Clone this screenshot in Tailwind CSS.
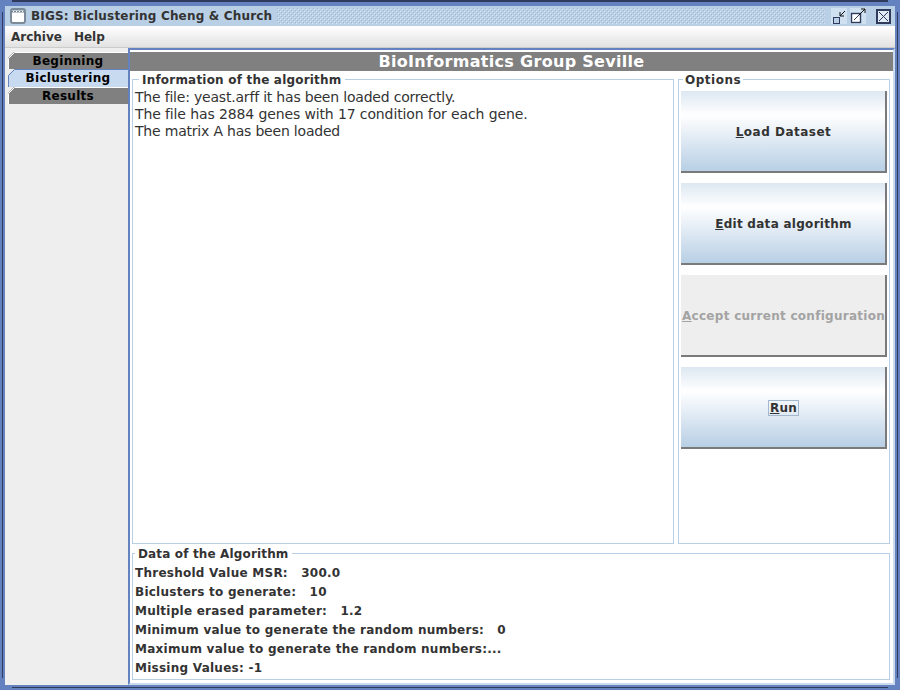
<!DOCTYPE html>
<html lang="en">
<head>
  <meta charset="UTF-8" />
  <title>BIGS: Biclustering Cheng &amp; Church</title>
  <script src="https://cdn.jsdelivr.net/npm/@tailwindcss/browser@4"></script>
</head>
<body class="w-[900px] h-[690px] overflow-hidden bg-[#6382bf] font-['DejaVu_Sans',sans-serif] text-[#333333] text-[12px]">
  <div class="relative w-[900px] h-[690px] pl-[5px] pr-[5px] pt-[6px] pb-[5px] flex flex-col">
    <!-- Frame lines, they stop before the corners -->
    <div class="absolute top-0 left-[12px] right-[12px] h-[2px] bg-[#2f3a5c]"></div>
    <div class="absolute bottom-[2px] left-[12px] right-[12px] h-px bg-[#2f3a5c]"></div>
    <div class="absolute left-[2px] top-[12px] bottom-[12px] w-px bg-[#2f3a5c]"></div>
    <div class="absolute right-[2px] top-[12px] bottom-[12px] w-px bg-[#2f3a5c]"></div>
    <!-- Title bar -->
    <header class="h-[20px] shrink-0 flex items-center bg-[#b8cfe5] pl-[5px]">
      <svg class="w-[16px] h-[16px] shrink-0" viewBox="0 0 16 16"><rect x="1" y="1" width="14" height="14" rx="2" fill="#fff" stroke="#7a8a99" stroke-width="2"/><path d="M2 3.5h12" stroke="#7a8a99" stroke-width="2"/><path d="M3 3.5h10" stroke="#fff" stroke-width="1" stroke-dasharray="1 2"/></svg>
      <span class="ml-[5px] font-bold whitespace-nowrap tracking-[0.18px]">BIGS: Biclustering Cheng &amp; Church</span>
      <svg class="flex-1 h-[16px] mx-[5px] min-w-0" aria-hidden="true"><defs><pattern id="bumps" width="4" height="4" patternUnits="userSpaceOnUse"><rect x="0" y="0" width="1" height="1" fill="#a3b8cc"/><rect x="2" y="2" width="1" height="1" fill="#a3b8cc"/><rect x="1" y="1" width="1" height="1" fill="#dfeaf4"/><rect x="3" y="3" width="1" height="1" fill="#dfeaf4"/></pattern></defs><rect width="100%" height="100%" fill="url(#bumps)"/></svg>
      <svg class="w-[16px] h-[16px] shrink-0 ml-[1px]" viewBox="0 0 16 16"><rect width="16" height="16" fill="#cfe0f0"/><rect x="2.5" y="9.5" width="6" height="6" fill="#b8cfe5" stroke="#2f3a5c"/><path d="M9 8l5-5M9 8h4M9 8V4" stroke="#111" fill="none"/></svg>
      <svg class="w-[16px] h-[16px] shrink-0 ml-[3px]" viewBox="0 0 16 16"><rect width="16" height="16" fill="#cfe0f0"/><rect x="1.5" y="5.5" width="9" height="9" fill="#fff" stroke="#2f3a5c" stroke-width="1.4"/><path d="M4 12l6-6" stroke="#2f3a5c"/><path d="M9 7l6-6M15 1h-4M15 1v4" stroke="#111" fill="none"/></svg>
      <svg class="w-[15px] h-[15px] shrink-0 ml-[10px] mr-[4px]" viewBox="0 0 15 15"><rect x="1" y="1" width="13" height="13" fill="#dfeaf4" stroke="#2f3a5c" stroke-width="2"/><path d="M3 3l9 9M12 3l-9 9" stroke="#2f3a5c"/></svg>
    </header>
    <!-- Menu bar -->
    <nav class="h-[21px] shrink-0 flex items-center gap-[12px] pl-[6px] bg-gradient-to-b from-white to-[#e2e2e2] font-bold">
      <span>Archive</span><span>Help</span>
    </nav>
    <div class="flex-1 flex bg-[#eeeeee] border-t border-[#cccccc] min-h-0">
      <!-- Tabs -->
      <aside class="w-[123px] shrink-0 pt-[4px] pl-[3px] font-bold text-black tracking-[0.3px]">
        <div class="relative h-[17px] flex items-center justify-center">
          <svg class="absolute inset-0 w-full h-full" viewBox="0 0 120 17" preserveAspectRatio="none"><path d="M0 17V6L6 0H120V17Z" fill="#808080"/><path d="M0.5 17V6.5L6.5 0.5H120" fill="none" stroke="#fff"/></svg>
          <span class="relative">Beginning</span>
        </div>
        <div class="relative h-[18px] flex items-center justify-center">
          <svg class="absolute inset-0 w-full h-full" viewBox="0 0 120 18" preserveAspectRatio="none"><path d="M0 18V6L6 0H120V18Z" fill="#c8daef"/><path d="M0.5 18V6.5L6.5 0.5H120" fill="none" stroke="#6382bf"/></svg>
          <span class="relative">Biclustering</span>
        </div>
        <div class="relative h-[17px] flex items-center justify-center">
          <svg class="absolute inset-0 w-full h-full" viewBox="0 0 120 17" preserveAspectRatio="none"><path d="M0 17V6L6 0H120V17Z" fill="#808080"/><path d="M0.5 17V6.5L6.5 0.5H120" fill="none" stroke="#fff"/></svg>
          <span class="relative">Results</span>
        </div>
      </aside>
      <!-- Main panel -->
      <main class="flex-1 min-w-0 flex flex-col bg-white border-l-2 border-t-2 border-r-2 border-b-2 border-l-[#6382bf] border-t-[#6382bf] border-r-[#cbdaec] border-b-[#cbdaec] pt-[2px] pl-[2px] pr-[3px] pb-[3px]">
        <div class="h-[19px] shrink-0 -ml-[2px] -mr-[3px] bg-[#808080] text-white font-bold text-[16px] tracking-[0.3px] flex items-center justify-center">BioInformatics Group Seville</div>
        <div class="flex-1 flex gap-[4px] mt-[8px] min-h-0">
          <section class="relative w-[542px] border border-[#b8cfe5] pt-[9px] pl-[2px] text-[14px] leading-[17px]">
            <span class="absolute -top-[7px] left-[6px] bg-white px-[3px] font-bold text-[12px] tracking-[0.2px] leading-[15px]">Information of the algorithm</span>
            <p class="tracking-[-0.2px]">The file: yeast.arff it has been loaded correctly.</p>
            <p class="tracking-[-0.12px]">The file has 2884 genes with 17 condition for each gene.</p>
            <p class="tracking-[-0.2px]">The matrix A has been loaded</p>
          </section>
          <section class="relative flex-1 border border-[#b8cfe5] pt-[11px] pl-[2px] flex flex-col gap-[10px]">
            <span class="absolute -top-[7px] left-[4px] bg-white px-[2px] font-bold tracking-[0.5px] leading-[15px]">Options</span>
            <button class="w-[206px] h-[82px] shrink-0 pt-px pl-px border-r-2 border-b-2 border-[#7a7a7a] bg-gradient-to-b from-[#dde8f2] via-white via-30% to-[#b8cfe5] font-bold tracking-[0.5px]"><u>L</u>oad Dataset</button>
            <button class="w-[206px] h-[82px] shrink-0 pt-px pl-px border-r-2 border-b-2 border-[#7a7a7a] bg-gradient-to-b from-[#dde8f2] via-white via-30% to-[#b8cfe5] font-bold tracking-[0.28px]"><u>E</u>dit data algorithm</button>
            <button class="w-[206px] h-[82px] shrink-0 pt-px pl-px border-r-2 border-b-2 border-[#7a7a7a] bg-[#eeeeee] text-[#a3a3a3] font-bold tracking-[0.28px] whitespace-nowrap"><u>A</u>ccept current configuration</button>
            <button class="w-[206px] h-[82px] shrink-0 pt-px pl-px border-r-2 border-b-2 border-[#7a7a7a] bg-gradient-to-b from-[#dde8f2] via-white via-30% to-[#b8cfe5] font-bold tracking-[0.3px]"><span class="border border-[#a3b8cc] px-px"><u>R</u>un</span></button>
          </section>
        </div>
        <section class="relative h-[127px] shrink-0 mt-[9px] border border-[#b8cfe5] pt-[10px] pl-[2px] font-bold tracking-[0.25px] leading-[19px]">
          <span class="absolute -top-[7px] left-[2px] bg-white px-[3px] tracking-[0.15px] leading-[15px]">Data of the Algorithm</span>
          <p>Threshold Value MSR:&nbsp;&nbsp; 300.0</p>
          <p>Biclusters to generate:&nbsp;&nbsp; 10</p>
          <p>Multiple erased parameter:&nbsp;&nbsp; 1.2</p>
          <p>Minimum value to generate the random numbers:&nbsp;&nbsp; 0</p>
          <p>Maximum value to generate the random numbers:...</p>
          <p>Missing Values: -1</p>
        </section>
      </main>
    </div>
  </div>
</body>
</html>
